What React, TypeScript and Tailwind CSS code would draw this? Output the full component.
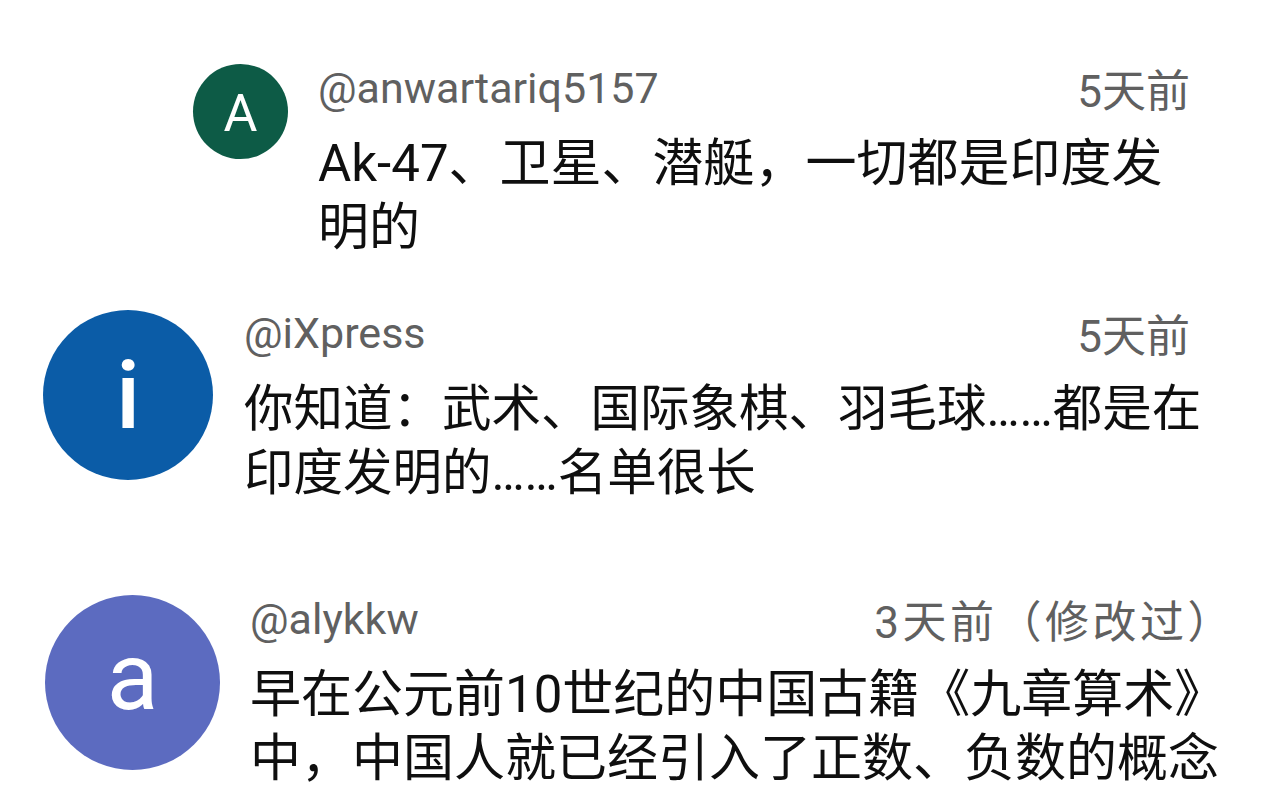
import React from "react";

const FONT = "font-['Roboto','Noto_Sans_CJK_SC',sans-serif]";

export default function App() {
  return (
    <div className={`w-[1280px] h-[792px] overflow-hidden bg-white ${FONT}`}>
      {/* Comment 1 */}
      <div className="flex items-start pl-[193px] pt-[64px]">
        <div className="w-[95px] h-[95px] shrink-0 rounded-full bg-[#0d5b46] flex items-center justify-center pt-[5px] text-white text-[52px] leading-none">
          A
        </div>
        <div className="ml-[30px] w-[872px]">
          <div className="flex justify-between items-start h-[48px] leading-[48px] text-[#606060]">
            <span className="text-[43px]">@anwartariq5157</span>
            <span className="text-[44px] mt-[4px]">5天前</span>
          </div>
          <div className="mt-[20px] text-[51px] leading-[64px] text-[#0f0f0f] whitespace-nowrap">
            Ak-47、卫星、潜艇，一切都是印度发
            <br />
            明的
          </div>
        </div>
      </div>

      {/* Comment 2 */}
      <div className="flex items-start pl-[43px] mt-[50px]">
        <div className="w-[170px] h-[170px] shrink-0 rounded-full bg-[#0b5ca7] flex items-center justify-center text-white text-[95px] font-medium leading-none">
          i
        </div>
        <div className="ml-[31px] w-[946px] -mt-[1px]">
          <div className="flex justify-between items-start h-[48px] leading-[48px] text-[#606060]">
            <span className="text-[43px]">@iXpress</span>
            <span className="text-[44px] mt-[4px]">5天前</span>
          </div>
          <div className="mt-[20px] text-[49.5px] leading-[64px] text-[#0f0f0f] whitespace-nowrap">
            你知道：武术、国际象棋、羽毛球……都是在
            <br />
            印度发明的……名单很长
          </div>
        </div>
      </div>

      {/* Comment 3 */}
      <div className="flex items-start pl-[45px] mt-[90px]">
        <div className="w-[175px] h-[175px] shrink-0 rounded-full bg-[#5c6bc0] flex items-center justify-center pb-[12px] text-white text-[95px] leading-none">
          a
        </div>
        <div className="ml-[30px] w-[985px]">
          <div className="flex justify-between items-start h-[48px] leading-[48px] text-[#606060]">
            <span className="text-[43px]">@alykkw</span>
            <span className="text-[44px] mt-[4px] tracking-[3.5px]">3天前（修改过）</span>
          </div>
          <div className="mt-[20px] text-[51px] leading-[64px] text-[#0f0f0f] whitespace-nowrap">
            早在公元前10世纪的中国古籍《九章算术》
            <br />
            中，中国人就已经引入了正数、负数的概念
          </div>
        </div>
      </div>
    </div>
  );
}
